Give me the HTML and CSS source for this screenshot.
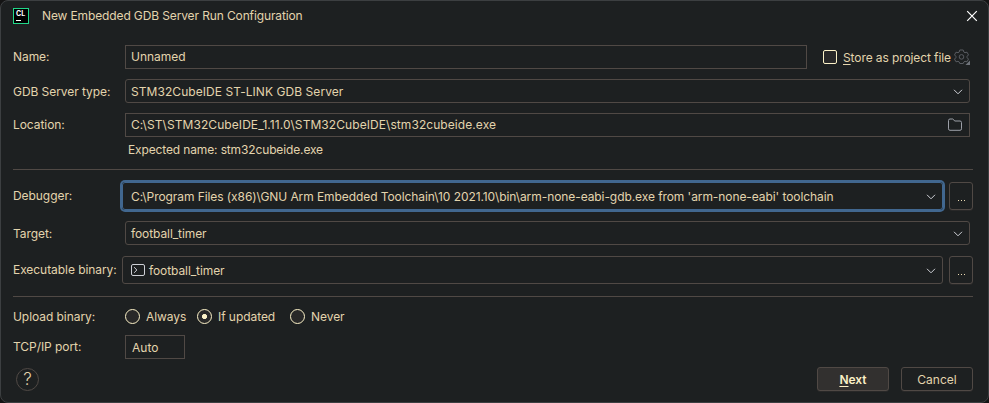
FILE: index.html
```html
<!DOCTYPE html>
<html lang="en">
<head>
<meta charset="utf-8">
<title>New Embedded GDB Server Run Configuration</title>
<link rel="stylesheet" href="styles.css">
</head>
<body>
<div class="dialog">
  <header class="titlebar">
    <div class="logo"><span class="logo-text">CL</span><i class="logo-bar"></i></div>
    <h1 class="title">New Embedded GDB Server Run Configuration</h1>
    <svg class="close" width="12" height="12" viewBox="0 0 12 12"><path d="M1.2 1.2l9.6 9.6M10.8 1.2l-9.6 9.6"/></svg>
  </header>

  <div class="row row-name">
    <label class="label">Name:</label>
    <div class="field name-field"><span class="t-name">Unnamed</span></div>
    <div class="store">
      <span class="checkbox"></span>
      <span class="store-text"><u>S</u>tore as project file</span>
      <svg class="gear" width="16" height="16" viewBox="0 0 16 16"><path d="M5.800 1h3.400l.6 2 1.200.7 2-.5 1.500 2.700-1.400 1.400v1.400l1.400 1.400-1.500 2.700-2-.5-1.200.7-.6 1.500H5.800l-.6-1.500-1.200-.7-2 .5-1.500-2.700 1.400-1.400V7.300L.5 5.900 2 3.200l2 .5L5.200 3z"/><circle cx="7.500" cy="7.900" r="2.300"/><path class="corner" d="M16 11.500V16h-4.500z"/></svg>
    </div>
  </div>

  <div class="row row-type">
    <label class="label">GDB Server type:</label>
    <div class="field combo"><span class="t-type">STM32CubeIDE ST-LINK GDB Server</span><svg class="chev" width="10" height="6" viewBox="0 0 10 6"><path d="M1 .8l4 4 4-4"/></svg></div>
  </div>

  <div class="row row-location">
    <label class="label">Location:</label>
    <div class="field"><span class="t-location">C:\ST\STM32CubeIDE_1.11.0\STM32CubeIDE\stm32cubeide.exe</span><svg class="folder" width="16" height="14" viewBox="0 0 16 14"><path d="M1.500 10.800V2.500q0-1.500 1.500-1.500h2.700l2.200 2h5.100q1.500 0 1.500 1.500v6.300q0 1.500-1.500 1.500H3q-1.500 0-1.500-1.500z"/></svg></div>
  </div>
  <p class="hint">Expected name: stm32cubeide.exe</p>

  <hr class="rule">

  <div class="row row-debugger">
    <label class="label">Debugger:</label>
    <div class="field combo tall focused"><span class="t-debugger">C:\Program Files (x86)\GNU Arm Embedded Toolchain\10 2021.10\bin\arm-none-eabi-gdb.exe from 'arm-none-eabi' toolchain</span><svg class="chev" width="10" height="6" viewBox="0 0 10 6"><path d="M1 .8l4 4 4-4"/></svg></div>
    <button class="button more"><i></i><i></i><i></i></button>
  </div>

  <div class="row row-target">
    <label class="label">Target:</label>
    <div class="field combo"><span class="t-target">football_timer</span><svg class="chev" width="10" height="6" viewBox="0 0 10 6"><path d="M1 .8l4 4 4-4"/></svg></div>
  </div>

  <div class="row row-binary">
    <label class="label">Executable binary:</label>
    <div class="field combo tall"><svg class="console" width="14" height="12" viewBox="0 0 14 12"><rect x=".5" y=".5" width="13" height="11" rx="1.500"/><path d="M3.200 3.200L5.800 6 3.200 8.800"/></svg><span class="t-target">football_timer</span><svg class="chev" width="10" height="6" viewBox="0 0 10 6"><path d="M1 .8l4 4 4-4"/></svg></div>
    <button class="button more"><i></i><i></i><i></i></button>
  </div>

  <hr class="rule">

  <div class="row row-upload">
    <label class="label">Upload binary:</label>
    <div class="radios">
      <span class="radio"></span><span class="radio-text always">Always</span>
      <span class="radio on"></span><span class="radio-text updated">If updated</span>
      <span class="radio"></span><span class="radio-text">Never</span>
    </div>
  </div>

  <div class="row row-port">
    <label class="label">TCP/IP port:</label>
    <div class="field port">Auto</div>
  </div>

  <footer class="footer">
    <div class="help">?</div>
    <button class="button primary"><span><u>N</u>ext</span></button>
    <button class="button">Cancel</button>
  </footer>
</div>
</body>
</html>
```

FILE: styles.css
```css
* { box-sizing: border-box; }
body {
  margin: 0;
  background: #141414;
  color: #e3d4ad;
  font: 12px/16px Inter, sans-serif;
}
.dialog {
  width: 989px;
  height: 403px;
  padding: 0 15px 0 12px;
  border: 1px solid #3c3f41;
  border-radius: 8px;
  background: #1d2021;
  overflow: hidden;
  white-space: nowrap;
}
.titlebar {
  display: flex;
  align-items: center;
  height: 30px;
}
.logo {
  width: 16px;
  height: 16px;
  margin-top: -1px;
  border: 1px solid #21d789;
  background: #000;
  padding: 2px 0 0 2px;
}
.logo-text {
  display: block;
  font: 700 7px/6px Inter, sans-serif;
  color: #fff;
}
.logo-bar {
  display: block;
  width: 5px;
  height: 1px;
  margin-top: 3px;
  background: #fff;
}
.title {
  margin: 0 0 0 13px;
  font: inherit;
  letter-spacing: -0.125px;
}
.close {
  margin-left: auto;
  margin-right: -5px;
  fill: none;
  stroke: #fff;
  stroke-width: 1.2;
}
.row {
  display: flex;
  align-items: center;
  height: 24px;
}
.row-name { margin-top: 14px; }
.row-type, .row-location { margin-top: 10px; padding-right: 3px; }
.row-type .label, .row-target .label { padding-top: 2px; }
.row-debugger { margin-top: 12px; height: 28px; }
.row-target { margin-top: 11px; padding-right: 3px; }
.row-binary { margin-top: 11px; height: 28px; }
.label { flex: none; width: 112px; letter-spacing: -0.06px; }
.field {
  display: flex;
  align-items: center;
  flex: 1;
  height: 24px;
  padding: 0 5px;
  border: 1px solid #504945;
}
.name-field { flex: none; width: 682px; }
.combo { border-radius: 3px; padding-top: 2px; }
.tall {
  height: 28px;
  margin-left: -3px;
  padding-left: 8px;
}
.focused {
  border-color: #41678f;
  box-shadow: 0 0 0 2px #41678f;
}
.t-type { letter-spacing: 0.06px; }
.t-location { letter-spacing: 0.07px; }
.t-debugger { letter-spacing: -0.077px; }
.t-target { letter-spacing: -0.09px; }
.chev {
  margin-left: auto;
  margin-right: 1px;
  fill: none;
  stroke: #ced0d6;
}
.folder {
  margin-left: auto;
  margin-right: 1px;
  fill: none;
  stroke: #9da0a8;
}
.console {
  margin-right: 4px;
  margin-top: -2px;
  fill: none;
  stroke: #ced0d6;
}
.store { display: flex; align-items: center; margin-left: 16px; }
.checkbox {
  width: 14px;
  height: 14px;
  border: 1px solid #fbf1c7;
  border-radius: 2px;
  background: #282828;
}
.store-text {
  width: 107px;
  margin: 1px 4px 0 6px;
  letter-spacing: -0.1px;
}
u { text-decoration: underline; text-underline-offset: 2px; }
.gear { fill: none; stroke: #5a5d63; }
.gear .corner { fill: #6f737a; stroke: none; }
.hint { margin: 5px 0 0 115px; height: 16px; letter-spacing: -0.135px; }
.rule {
  width: 960px;
  height: 1px;
  margin: 11px 0 0;
  border: 0;
  background: #504945;
}
.row-binary + .rule { margin-top: 12px; }
.button {
  width: 72px;
  height: 24px;
  padding: 0;
  border: 1px solid #504945;
  border-radius: 3px;
  background: #1d2021;
  box-shadow: 0 1px 0 #282828;
  color: inherit;
  font: inherit;
}
.more {
  display: flex;
  align-items: flex-end;
  justify-content: center;
  gap: 2px;
  width: 24px;
  height: 28px;
  margin-left: 6px;
  padding-bottom: 8px;
}
.more i { width: 1px; height: 1px; background: #ebdbb2; }
.row-upload { margin-top: 8px; height: 23px; }
.row-upload .label, .radio-text { padding-top: 1px; }
.radios { display: flex; align-items: center; height: 23px; }
.radio {
  width: 15px;
  height: 15px;
  border: 1px solid #fbf1c7;
  border-radius: 50%;
  background: #282828;
}
.radio.on { background: radial-gradient(circle, #fbf1c7 2.200px, #282828 2.900px); }
.radio-text { margin-left: 6px; letter-spacing: -0.06px; }
.always { width: 51px; }
.updated { width: 72px; }
.row-port { margin-top: 7px; }
.port { flex: none; width: 60px; padding-left: 6px; padding-top: 2px; }
.footer { display: flex; align-items: center; height: 24px; margin-top: 8px; gap: 12px; }
.help {
  width: 23px;
  height: 23px;
  margin: 0 auto 0 3px;
  border: 1px solid #504945;
  border-radius: 50%;
  font-size: 17px;
  font-weight: 300;
  line-height: 21px;
  text-align: center;
}
.primary { background: #32302f; color: #fbf1c7; font-weight: 600; }
.footer .button { padding-top: 1px; }
```
